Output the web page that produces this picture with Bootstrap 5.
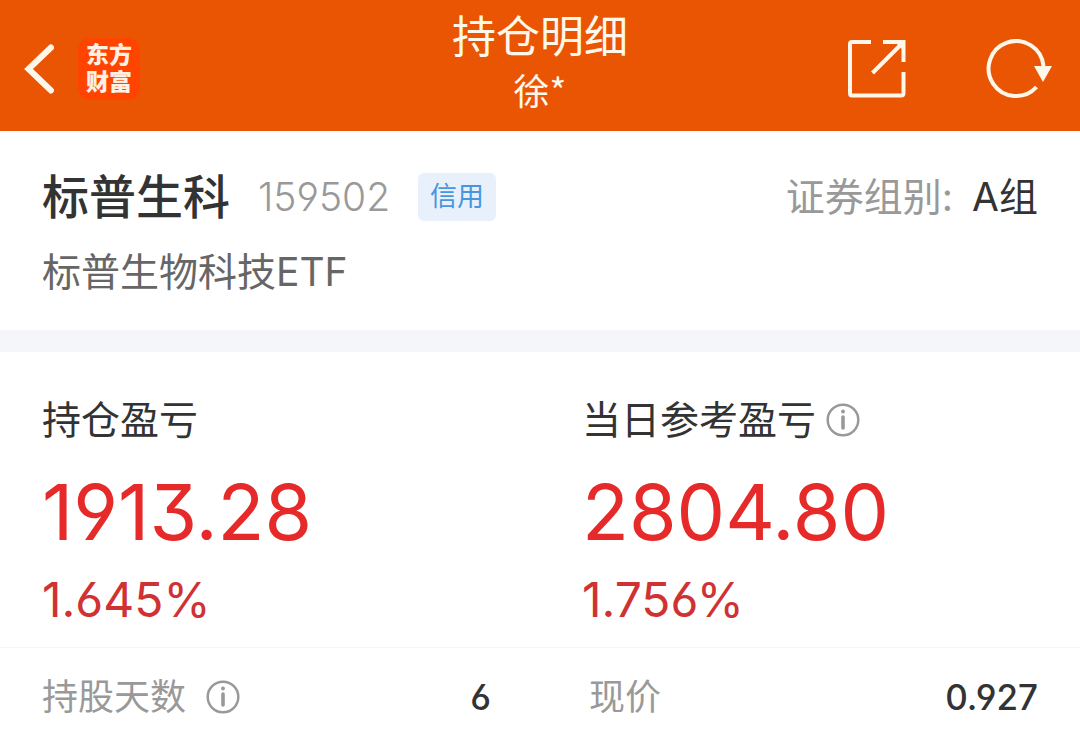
<!DOCTYPE html>
<html lang="zh-CN">
<head>
<meta charset="utf-8">
<meta name="viewport" content="width=device-width, initial-scale=1">
<title>持仓明细</title>
<link rel="stylesheet" href="https://cdn.jsdelivr.net/npm/bootstrap@5.3.0/dist/css/bootstrap.min.css">
<style>
  body {
    font-family: Inter, "Noto Sans CJK SC", sans-serif;
    font-feature-settings: "cv03", "cv04", "cv09";
    color: #333;
    background: #fff;
  }
  .app-header { background: #ea5504; color: #fff8ea; padding: 6px 24px 0; }
  .header-side { flex: 1 1 0; }
  .header-title { padding-bottom: 21px; }
  .header-title h1 { font-size: 44px; line-height: 62px; font-weight: 400; }
  .header-title p { font: 36px/42px "Noto Sans CJK SC", sans-serif; }
  .icon-btn { padding: 0; border: 0; background: none; color: inherit; line-height: 0; }
  .app-logo { width: 62px; height: 62px; border-radius: 12px; background: #ff4400; font: 900 23px/27px "Liberation Sans", "Noto Sans CJK SC", sans-serif; color: #fff0e4; text-decoration: none; }
  .app-logo span { height: 27px; }
  .share-btn { margin-right: 49px; }
  .page-pad { padding-left: 42px; padding-right: 42px; }
  .security { padding-top: 35px; padding-bottom: 27px; }
  .line-top { height: 62px; }
  .sec-name { font-size: 47px; line-height: 62px; font-weight: 500; }
  .sec-code { font-size: 39px; line-height: 62px; font-weight: 300; color: #999; }
  .credit-tag { margin-left: 28px; font-size: 27px; line-height: 48px; padding: 0 12px; border-radius: 6px; background: #e8f1fb; color: #4a95df; }
  .text-label { font-size: 39px; line-height: 62px; }
  .sec-full { padding-top: 13px; color: #666; }
  .muted { color: #999; }
  .band { height: 22px; background: #f5f6fa; }
  .profit { padding-top: 37px; padding-bottom: 21px; border-bottom: 1px solid #f5f5f5; }
  .profit-value { font-size: 77px; line-height: 122px; color: #e62a2a; }
  .profit-rate { font-size: 48px; line-height: 53px; color: #d03234; }
  .details { padding-top: 23px; padding-bottom: 16px; }
  .detail-text { font-size: 36px; line-height: 52px; }
  .col-left { padding-left: 42px; padding-right: 49px; }
  .col-right { padding-left: 49px; padding-right: 42px; }
  .profit .col-right { padding-left: 42px; }
  .info-near { margin-left: 10px; }
  .info-far { margin-left: 20px; }
  .detail-value { font-size: 35px; font-weight: 500; }
</style>
</head>
<body>
<header class="app-header d-flex">
  <div class="header-side d-flex align-items-center gap-4">
    <button class="icon-btn" type="button" aria-label="返回">
      <svg width="30" height="50" viewBox="0 0 30 50" fill="none" stroke="currentColor" stroke-width="6" stroke-linecap="round" stroke-linejoin="miter"><path d="M27 3.500L4.500 25L27 46.500"/></svg>
    </button>
    <a class="app-logo d-flex flex-column align-items-center justify-content-center" href="#"><span>东方</span><span>财富</span></a>
  </div>
  <div class="header-title text-center">
    <h1 class="m-0">持仓明细</h1>
    <p class="m-0">徐*</p>
  </div>
  <div class="header-side d-flex align-items-center justify-content-end">
    <button class="icon-btn share-btn" type="button" aria-label="分享">
      <svg width="90" height="60" viewBox="0 0 90 60" fill="none" stroke="currentColor" stroke-width="4"><path d="M24 3H5Q3 3 3 5V54Q3 56.500 5 56.500H54Q56.500 56.500 56.500 54V33M36 3H56.500V23" /><path d="M25.500 34L55 4.500"/><path d="M48 3H58V13Z" fill="currentColor" stroke="none"/></svg>
    </button>
    <button class="icon-btn" type="button" aria-label="刷新">
      <svg width="70" height="60" viewBox="0 0 70 60" fill="none" stroke="currentColor" stroke-width="4"><path d="M50.500 48A27.500 27.500 0 1 1 57.500 27"/><path d="M48 27H66L57 43Z" fill="currentColor" stroke="none"/></svg>
    </button>
  </div>
</header>
<main>
  <section class="security page-pad">
    <div class="line-top d-flex align-items-center justify-content-between">
      <div class="d-flex align-items-center">
        <h2 class="sec-name m-0">标普生科</h2>
        <span class="sec-code ms-4 ps-1">159502</span>
        <span class="credit-tag">信用</span>
      </div>
      <div class="text-label"><span class="muted">证券组别:</span> <span class="ms-2">A组</span></div>
    </div>
    <div class="text-label sec-full">标普生物科技ETF</div>
  </section>
  <div class="band"></div>
  <section class="profit row g-0">
    <div class="col-6 col-left">
      <div class="text-label">持仓盈亏</div>
      <div class="profit-value">1913.28</div>
      <div class="profit-rate">1.645%</div>
    </div>
    <div class="col-6 col-right">
      <div class="text-label d-flex align-items-center">当日参考盈亏
        <button class="icon-btn muted info-near" type="button" aria-label="当日参考盈亏说明">
          <svg width="34" height="34" viewBox="0 0 34 34" fill="none" stroke="currentColor" stroke-width="2.500"><circle cx="17" cy="17" r="15.300"/><circle cx="17" cy="8.500" r="1.900" fill="currentColor" stroke="none"/><path d="M17 14V25" stroke-width="3.600" stroke-linecap="round"/></svg>
        </button>
      </div>
      <div class="profit-value">2804.80</div>
      <div class="profit-rate">1.756%</div>
    </div>
  </section>
  <section class="details row g-0 detail-text">
    <div class="col-6 col-left d-flex justify-content-between">
      <span class="muted d-flex align-items-center">持股天数
        <button class="icon-btn muted info-far" type="button" aria-label="持股天数说明">
          <svg width="34" height="34" viewBox="0 0 34 34" fill="none" stroke="currentColor" stroke-width="2.500"><circle cx="17" cy="17" r="15.300"/><circle cx="17" cy="8.500" r="1.900" fill="currentColor" stroke="none"/><path d="M17 14V25" stroke-width="3.600" stroke-linecap="round"/></svg>
        </button>
      </span>
      <span class="detail-value">6</span>
    </div>
    <div class="col-6 col-right d-flex justify-content-between">
      <span class="muted">现价</span>
      <span class="detail-value">0.927</span>
    </div>
  </section>
</main>
<script src="https://cdn.jsdelivr.net/npm/bootstrap@5.3.0/dist/js/bootstrap.bundle.min.js"></script>
</body>
</html>
